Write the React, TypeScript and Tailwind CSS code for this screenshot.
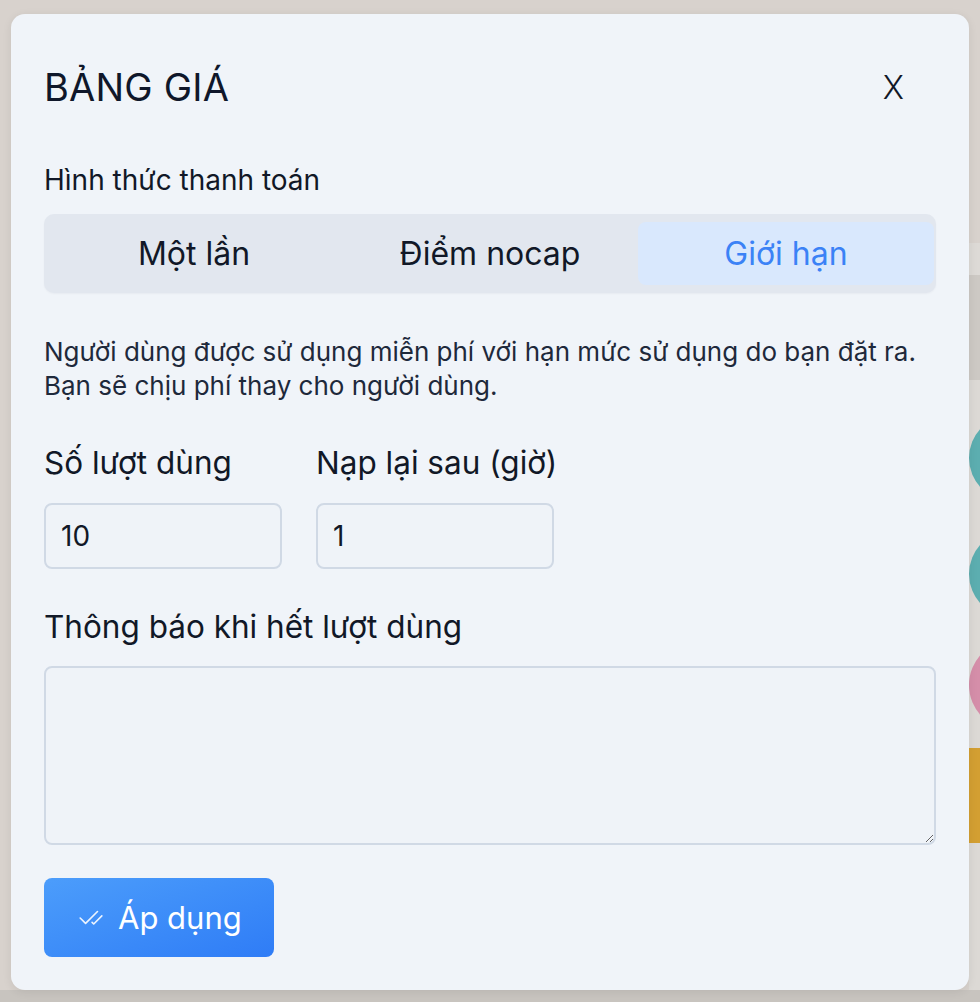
import React from "react";
import { CheckCheck } from "lucide-react";

export default function App() {
  const font = { fontFamily: "Inter, 'Noto Sans', sans-serif" };
  return (
    <div className="relative w-[980px] h-[1002px] overflow-hidden bg-[#d8d2cd]" style={font}>
      {/* background page (under overlay) */}
      <div className="flex flex-col h-full">
        <div className="flex flex-1">
          <div className="flex-1" />
          <div className="w-[11px] flex flex-col overflow-hidden">
            <div className="h-[243px] bg-[#d8d2cd]" />
            <div className="h-[32px] bg-[#dddad6]" />
            <div className="h-[105px] bg-[#cdc9c4]" />
            <div className="flex flex-col flex-1 bg-[#dcd9d5]">
              <div className="mt-[35px] h-[86px] w-[90px] rounded-full bg-[#5caeb0]" />
              <div className="mt-[29px] h-[88px] w-[90px] rounded-full bg-[#5caeb0]" />
              <div className="mt-[22px] h-[90px] w-[90px] rounded-full bg-[#d58ea9]" />
              <div className="mt-[18px] h-[95px] w-[90px] bg-[#d39f32]" />
            </div>
          </div>
        </div>
        <div className="h-[12px] bg-[#c8c4bf]" />
      </div>

      {/* modal */}
      <div className="absolute left-[11px] top-[14px] w-[958px] h-[976px] rounded-[14px] bg-[#f0f4f9] shadow-[0_2px_10px_rgba(0,0,0,0.08)] px-[33px] pt-[52px] flex flex-col">
        <div className="flex items-center justify-between h-[43px]">
          <h2 className="text-[38px] leading-[43px] font-normal text-[#0f172a] tracking-[0.2px]">BẢNG GIÁ</h2>
          <button className="mr-[32px] text-[32px] leading-none font-light text-[#111827]">X</button>
        </div>

        <div className="mt-[55px] text-[28px] leading-[32px] text-[#111827]">Hình thức thanh toán</div>

        <div className="mt-[18px] h-[79px] rounded-[10px] bg-[#e2e7ef] shadow-[0_1px_2px_rgba(15,23,42,0.04)] px-[2px] py-[8px] grid grid-cols-3">
          <div className="flex items-center justify-center rounded-[8px] text-[32px] text-[#111827]">Một lần</div>
          <div className="flex items-center justify-center rounded-[8px] text-[32px] text-[#111827]">Điểm nocap</div>
          <div className="flex items-center justify-center rounded-[8px] bg-[#d9e8fd] text-[32px] text-[#3b82f6]">Giới hạn</div>
        </div>

        <p className="mt-[42px] text-[26px] leading-[34px] text-[#1e293b] whitespace-nowrap">
          Người dùng được sử dụng miễn phí với hạn mức sử dụng do bạn đặt ra.
          <br />
          Bạn sẽ chịu phí thay cho người dùng.
        </p>

        <div className="mt-[42px] flex gap-[34px]">
          <div className="flex flex-col w-[238px]">
            <label className="text-[31.5px] leading-[36px] text-[#111827] whitespace-nowrap">Số lượt dùng</label>
            <input
              readOnly
              value="10"
              className="mt-[22px] h-[66px] w-[238px] rounded-[8px] border-2 border-[#d0d9e5] bg-[#eff3f8] px-[15px] text-[28px] text-[#111827] outline-none"
              style={font}
            />
          </div>
          <div className="flex flex-col w-[238px]">
            <label className="text-[31.5px] leading-[36px] text-[#111827] whitespace-nowrap">Nạp lại sau (giờ)</label>
            <input
              readOnly
              value="1"
              className="mt-[22px] h-[66px] w-[238px] rounded-[8px] border-2 border-[#d0d9e5] bg-[#eff3f8] px-[15px] text-[28px] text-[#111827] outline-none"
              style={font}
            />
          </div>
        </div>

        <div className="mt-[40px] text-[31.5px] leading-[36px] text-[#111827]">Thông báo khi hết lượt dùng</div>
        <textarea
          readOnly
          className="mt-[21px] h-[179px] w-full rounded-[8px] border-2 border-[#d0d9e5] bg-[#eff3f8] outline-none resize-y"
        />

        <div className="mt-[33px]">
          <button className="h-[79px] w-[230px] rounded-[8px] bg-gradient-to-br from-[#4c9dfb] to-[#2f7cf6] flex items-center pl-[34px] gap-[14px] text-white">
            <CheckCheck size={26} strokeWidth={1.5} className="text-white/90" />
            <span className="text-[31px] leading-none">Áp dụng</span>
          </button>
        </div>
      </div>
    </div>
  );
}
